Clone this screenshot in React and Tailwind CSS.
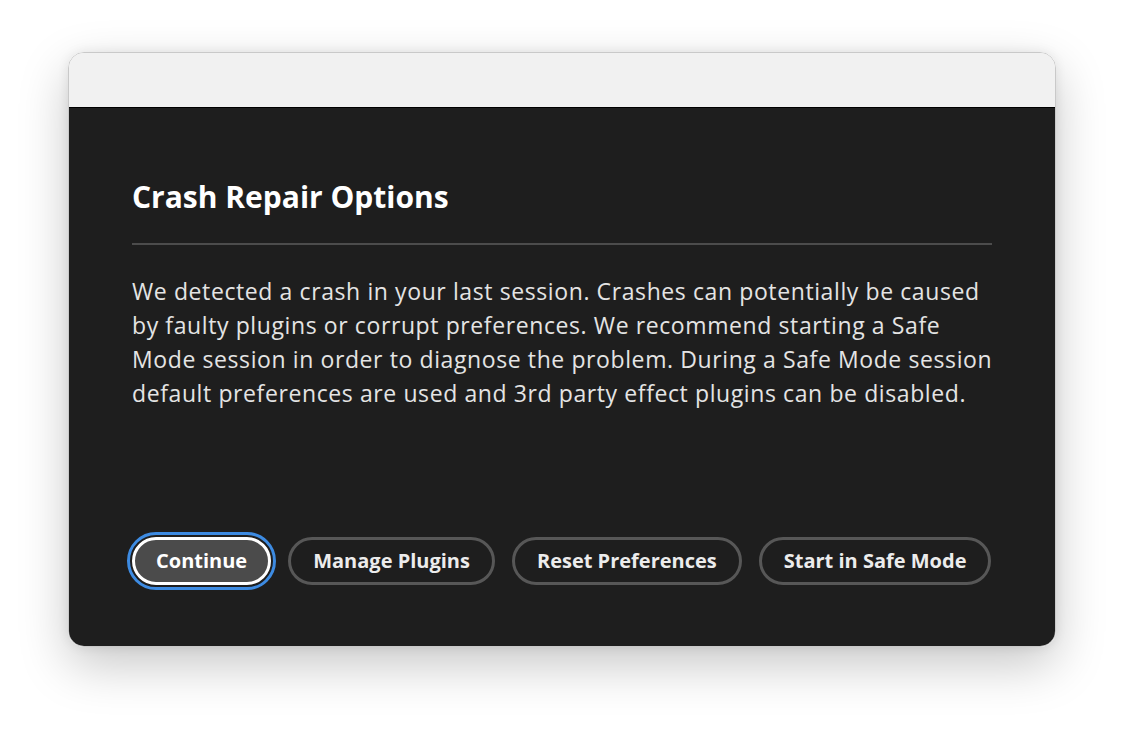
export default function App() {
    const buttons = ['Manage Plugins', 'Reset Preferences', 'Start in Safe Mode'];

    return (
        <div className="min-h-screen bg-white pt-[52px] pl-[68px] font-['Open_Sans','Noto_Sans',sans-serif]">
            {/* Window */}
            <div className="w-[988px] h-[595px] flex flex-col rounded-[16px] overflow-hidden border border-[#c9c9c9] shadow-[0_18px_50px_rgba(0,0,0,0.22),0_0_12px_rgba(0,0,0,0.08)]">
                {/* Title bar */}
                <div className="h-[55px] bg-[#f1f1f1] border-b border-black shrink-0"></div>

                {/* Body */}
                <div className="flex-1 bg-[#1e1e1e] pl-[63px] pr-[63px] pt-[71px]">
                    <h1 className="text-[30px] leading-[36px] font-bold text-white">Crash Repair Options</h1>
                    <div className="mt-[28px] h-[2px] bg-[#4c4c4c]"></div>
                    <p className="mt-[29px] w-[872px] text-[23px] leading-[34px] tracking-[0.6px] text-[#e4e4e4]">
                        We detected a crash in your last session. Crashes can potentially be caused by faulty plugins or corrupt preferences. We recommend starting a Safe Mode session in order to diagnose the problem. During a Safe Mode session default preferences are used and 3rd party effect plugins can be disabled.
                    </p>

                    {/* Actions */}
                    <div className="mt-[127px] flex items-center gap-[17px]">
                        <button className="shrink-0 whitespace-nowrap h-[48px] px-[21px] rounded-full bg-[#4b4b4b] border-[3px] border-white text-[20px] font-bold text-white outline-[3px] outline-solid outline-[#3d8be2] outline-offset-[2px]">
                            Continue
                        </button>
                        {buttons.map(label => (
                            <button
                                key={label}
                                className="shrink-0 whitespace-nowrap h-[48px] px-[22px] rounded-full bg-[#1e1e1e] border-[3px] border-[#575757] text-[20px] font-bold text-[#ececec]"
                            >
                                {label}
                            </button>
                        ))}
                    </div>
                </div>
            </div>
        </div>
    );
}
